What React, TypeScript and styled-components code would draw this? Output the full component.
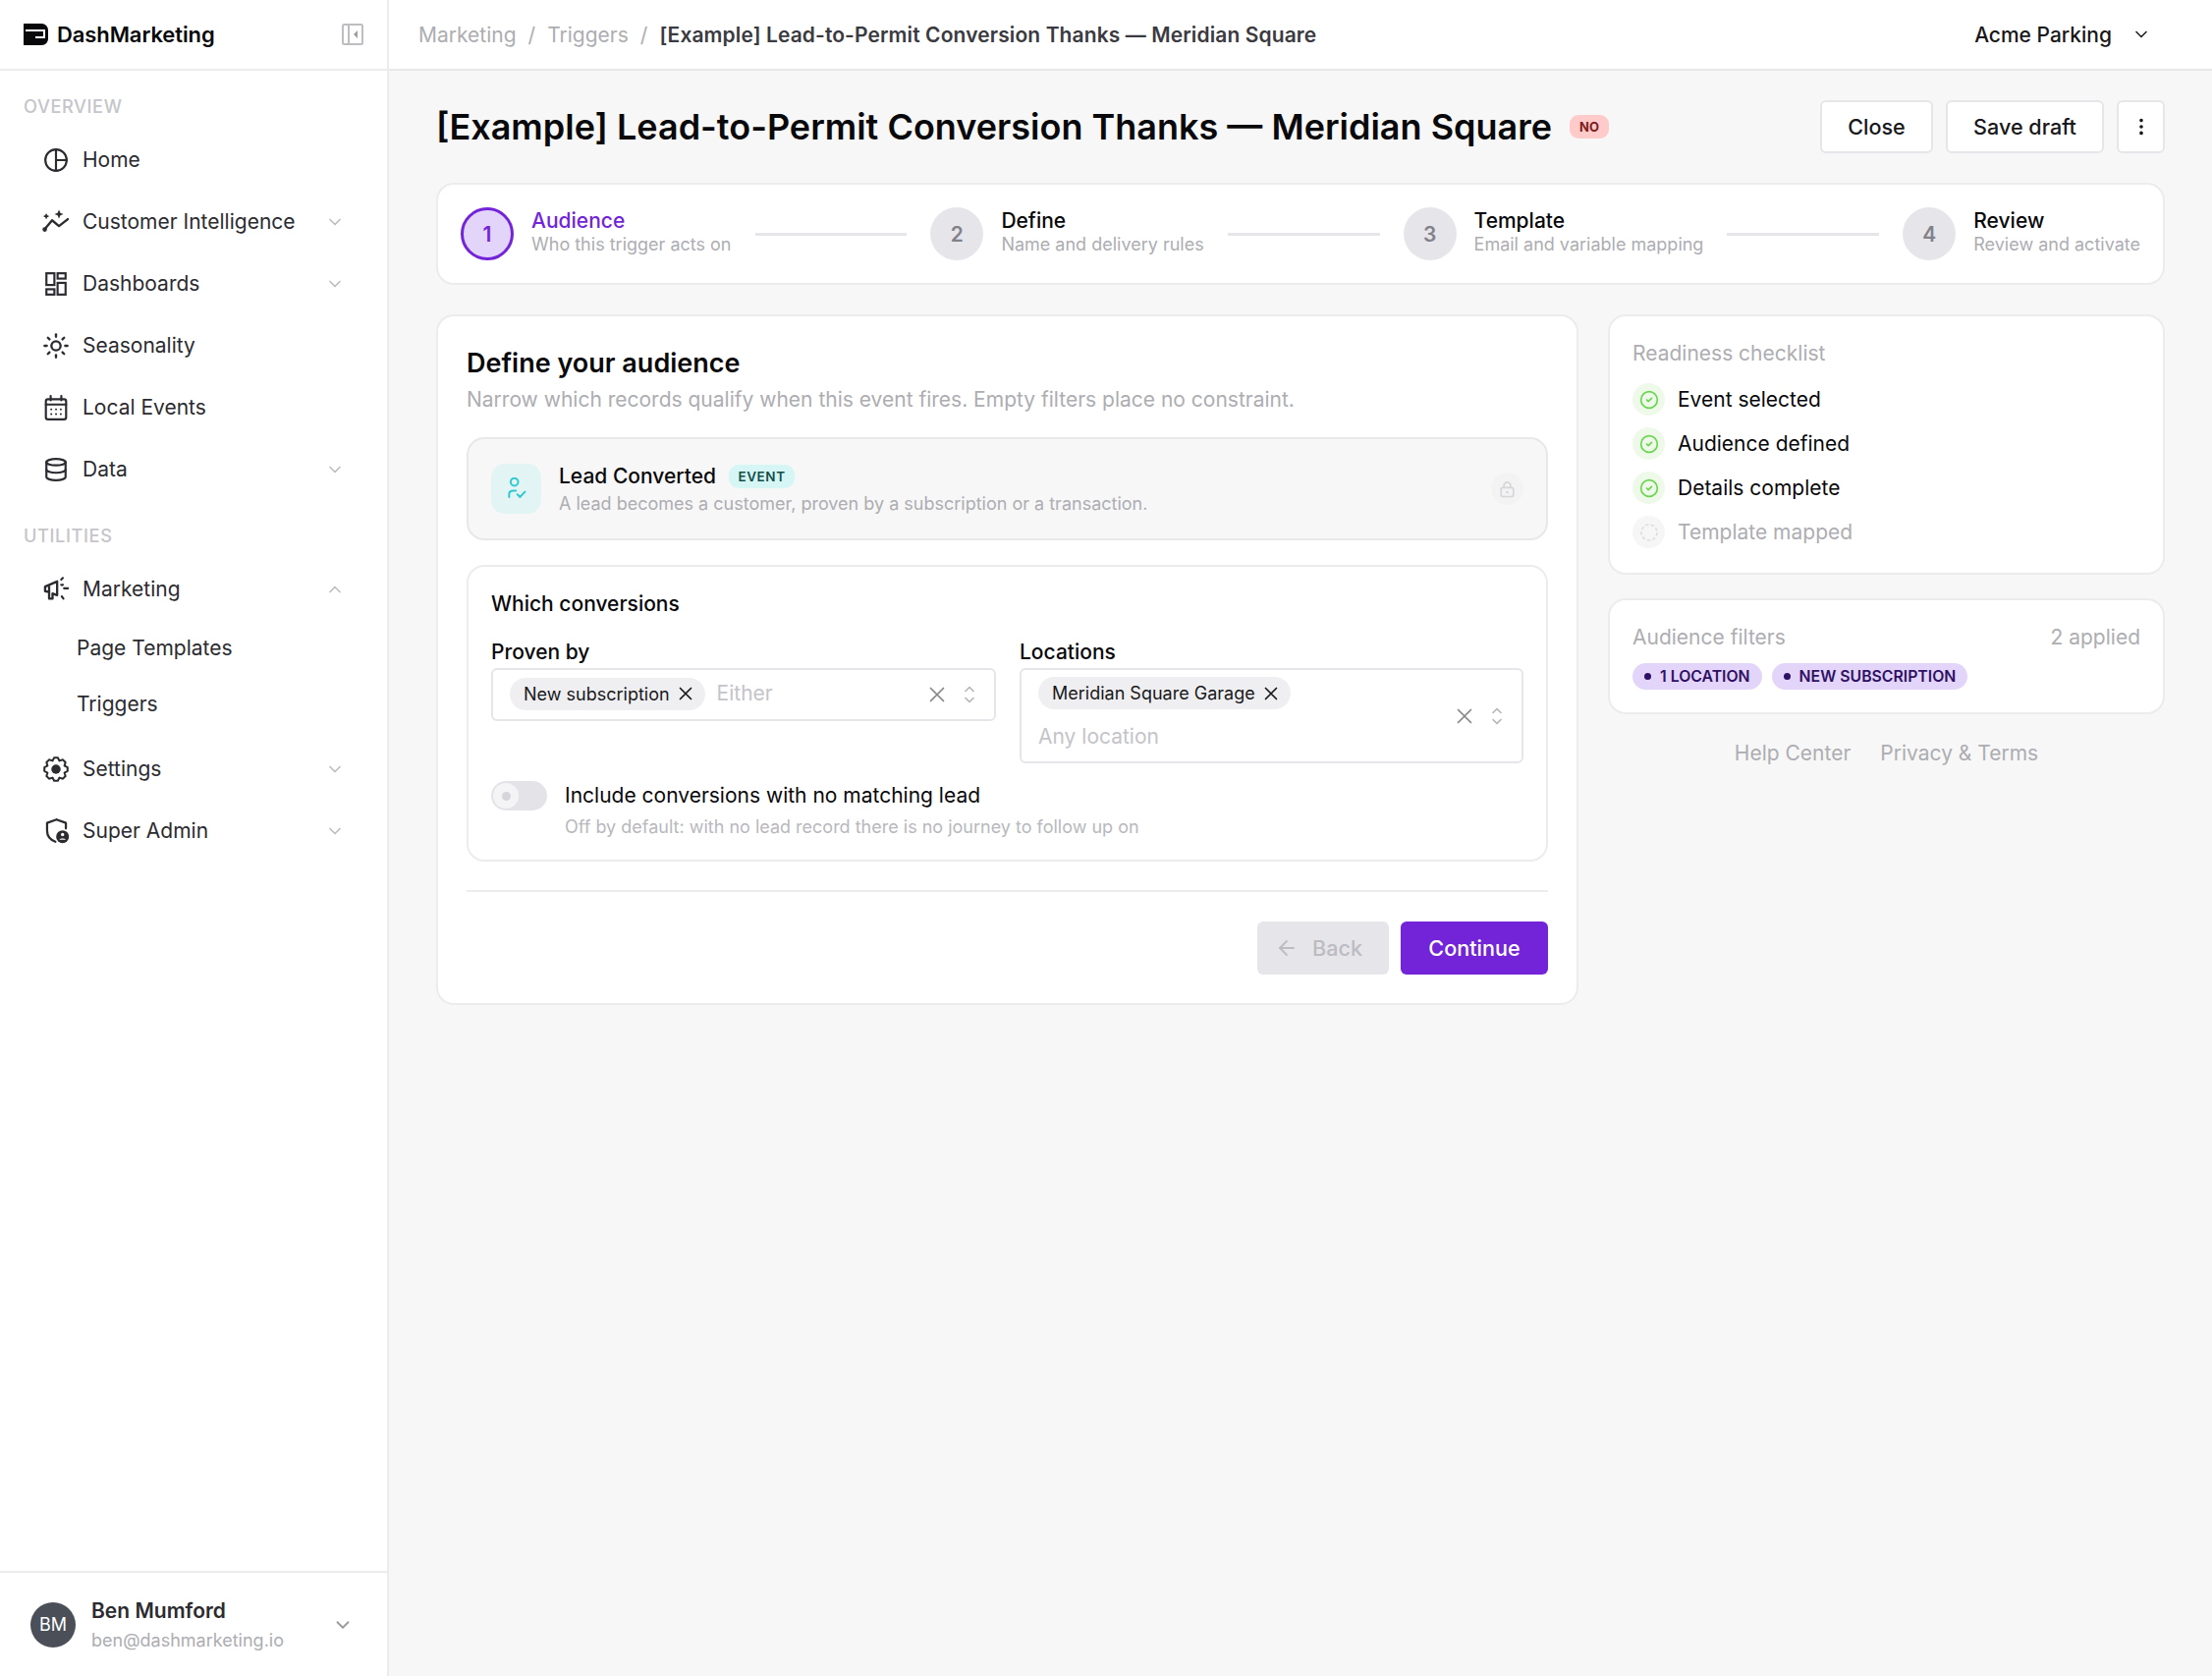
import React from "react";
import styled, { createGlobalStyle } from "styled-components";
import { ChevronDown, ChevronUp, Sun, Database, ArrowLeft, EllipsisVertical, CircleCheck } from "lucide-react";

const Global = createGlobalStyle`
  html, body { margin: 0; padding: 0; background: #f7f7f7; }
  body { font-family: Inter, "Liberation Sans", sans-serif; color: #09090b; }
  * { box-sizing: border-box; }
`;

const Shell = styled.div`
  display: flex;
  width: 2252px;
  height: 1706px;
  overflow: hidden;
`;

const Sidebar = styled.aside`
  width: 396px;
  flex: none;
  display: flex;
  flex-direction: column;
  background: #fff;
  border-right: 2px solid #ececef;
`;

const Brand = styled.div`
  height: 72px;
  flex: none;
  display: flex;
  align-items: center;
  padding: 0 24px 0 24px;
  border-bottom: 2px solid #ececef;
`;

const BrandName = styled.span`
  margin-left: 9px;
  font-size: 22px;
  font-weight: 600;
  letter-spacing: -0.1px;
  flex: 1;
`;

const SideNav = styled.nav`
  flex: 1;
  display: flex;
  flex-direction: column;
  padding: 26px 0 0;
`;

const SectionLabel = styled.div<{ $top?: number }>`
  font-size: 18.2px;
  line-height: 20px;
  font-weight: 500;
  letter-spacing: 0.6px;
  color: #c5c5ca;
  padding-left: 24px;
  margin-top: ${(p) => p.$top ?? 0}px;
  margin-bottom: 13px;
`;

const NavRow = styled.div`
  height: 63px;
  display: flex;
  align-items: center;
  padding: 0 43px 0 43px;
  font-size: 21px;
  color: #2b2b30;
`;

const NavIcon = styled.span`
  width: 28px;
  height: 28px;
  display: flex;
  align-items: center;
  justify-content: center;
  margin-right: 13px;
  color: #2b2b30;
`;

const NavText = styled.span`
  flex: 1;
`;

const SubRow = styled.div`
  height: 57px;
  display: flex;
  align-items: center;
  padding-left: 78px;
  font-size: 21px;
  color: #2b2b30;
`;

const SubList = styled.div`
  margin-bottom: 6px;
`;

const UserFooter = styled.div`
  height: 107px;
  flex: none;
  display: flex;
  align-items: center;
  padding: 0 34px 0 31px;
  border-top: 2px solid #ececef;
`;

const Avatar = styled.div`
  width: 46px;
  height: 46px;
  border-radius: 50%;
  background: #4b5058;
  color: #fff;
  font-size: 18px;
  display: flex;
  align-items: center;
  justify-content: center;
  margin-right: 16px;
`;

const UserMeta = styled.div`
  flex: 1;
  display: flex;
  flex-direction: column;
  gap: 7px;
`;

const UserName = styled.div`
  font-size: 21px;
  line-height: 25px;
  font-weight: 600;
  color: #2b2b30;
`;

const UserMail = styled.div`
  font-size: 18px;
  line-height: 22px;
  color: #adadb2;
`;

const Main = styled.main`
  flex: 1;
  min-width: 0;
  display: flex;
  flex-direction: column;
  background: #f7f7f7;
`;

const TopBar = styled.header`
  height: 72px;
  flex: none;
  display: flex;
  align-items: center;
  background: #fff;
  border-bottom: 2px solid #e8e8eb;
  padding: 0 62px 0 30px;
`;

const Crumbs = styled.div`
  flex: 1;
  display: flex;
  align-items: center;
  gap: 12px;
  font-size: 21px;
  color: #adadb2;
`;

const CrumbNow = styled.span`
  font-weight: 600;
  color: #3a3a40;
  letter-spacing: 0.1px;
`;

const Org = styled.div`
  display: flex;
  align-items: center;
  gap: 20px;
  font-size: 21px;
  font-weight: 500;
  color: #18181b;
`;

const Content = styled.div`
  padding: 30px 48px 0;
  display: flex;
  flex-direction: column;
`;

const TitleRow = styled.div`
  height: 54px;
  display: flex;
  align-items: center;
`;

const Title = styled.h1`
  margin: 0;
  font-size: 36px;
  font-weight: 600;
  color: #09090b;
  white-space: nowrap;
`;

const NoBadge = styled.span`
  margin-left: 18px;
  width: 40px;
  height: 24px;
  border-radius: 9px;
  background: #fecaca;
  color: #7f1d1d;
  font-size: 13px;
  font-weight: 700;
  display: flex;
  align-items: center;
  justify-content: center;
`;

const Actions = styled.div`
  margin-left: auto;
  display: flex;
  gap: 13px;
`;

const GhostButton = styled.button<{ $w: number }>`
  width: ${(p) => p.$w}px;
  height: 54px;
  border: 2px solid #e6e6ea;
  border-radius: 6px;
  background: #fff;
  font: 500 21.6px Inter, sans-serif;
  color: #18181b;
  display: flex;
  align-items: center;
  justify-content: center;
  padding: 0;
`;

const Stepper = styled.section`
  margin-top: 30px;
  height: 104px;
  display: flex;
  align-items: center;
  padding: 0 23px;
  background: #fff;
  border: 2px solid #ececef;
  border-radius: 18px;
`;

const StepDot = styled.div<{ $active?: boolean }>`
  width: 54px;
  height: 54px;
  border-radius: 50%;
  flex: none;
  display: flex;
  align-items: center;
  justify-content: center;
  font-size: 21px;
  font-weight: 600;
  color: ${(p) => (p.$active ? "#7324d9" : "#82828a")};
  background: ${(p) => (p.$active ? "#e3d5f9" : "#e6e5ea")};
  border: ${(p) => (p.$active ? "3px solid #7324d9" : "none")};
`;

const StepCopy = styled.div`
  margin-left: 18px;
  padding-bottom: 2px;
  flex: none;
  display: flex;
  flex-direction: column;
`;

const StepName = styled.div<{ $active?: boolean }>`
  font-size: 21px;
  line-height: 24px;
  font-weight: 500;
  color: ${(p) => (p.$active ? "#7324d9" : "#09090b")};
`;

const StepSub = styled.div`
  font-size: 18px;
  line-height: 24px;
  color: #adadb2;
`;

const StepLine = styled.div`
  flex: 1;
  height: 3px;
  margin: 0 24px;
  background: #e6e5ea;
`;

const Columns = styled.div`
  margin-top: 30px;
  display: grid;
  grid-template-columns: 1163px 567px;
  gap: 30px;
  align-items: start;
`;

const Card = styled.section`
  background: #fff;
  border: 2px solid #ececef;
  border-radius: 18px;
`;

const FormCard = styled(Card)`
  height: 703px;
  padding: 30px 29px 0;
`;

const FormTitle = styled.h2`
  margin: 0;
  font-size: 27px;
  line-height: 36px;
  font-weight: 600;
`;

const FormSub = styled.p`
  margin: 3px 0 0;
  font-size: 21px;
  line-height: 32px;
  color: #adadb2;
`;

const EventBox = styled.div`
  margin-top: 22px;
  height: 105px;
  display: flex;
  align-items: center;
  padding: 0 23px;
  background: #f7f7f7;
  border: 2px solid #e8e8ea;
  border-radius: 18px;
`;

const EventIcon = styled.div`
  width: 51px;
  height: 51px;
  flex: none;
  border-radius: 14px;
  background: #e3f4f5;
  display: flex;
  align-items: center;
  justify-content: center;
  margin-right: 18px;
`;

const EventCopy = styled.div`
  flex: 1;
  padding-top: 2px;
  display: flex;
  flex-direction: column;
  gap: 2px;
`;

const EventTop = styled.div`
  display: flex;
  align-items: center;
  gap: 13px;
  font-size: 21px;
  line-height: 26px;
  font-weight: 500;
`;

const EventTag = styled.span`
  width: 67px;
  height: 24px;
  border-radius: 10px;
  background: #d5f6f5;
  color: #134e4a;
  font-size: 13.5px;
  font-weight: 600;
  letter-spacing: 0.6px;
  display: flex;
  align-items: center;
  justify-content: center;
`;

const EventDesc = styled.div`
  font-size: 18px;
  line-height: 26px;
  color: #adadb2;
`;

const LockBubble = styled.div`
  width: 33px;
  height: 33px;
  border-radius: 50%;
  background: #f3f3f4;
  display: flex;
  align-items: center;
  justify-content: center;
`;

const ConversionBox = styled.div`
  margin-top: 25px;
  height: 302px;
  padding: 24px 23px 0;
  border: 2px solid #ececef;
  border-radius: 18px;
`;

const BoxTitle = styled.div`
  font-size: 21px;
  line-height: 28px;
  font-weight: 500;
`;

const FieldGrid = styled.div`
  margin-top: 22px;
  display: grid;
  grid-template-columns: 514px 513px;
  gap: 24px;
  align-items: start;
`;

const Field = styled.div`
  display: flex;
  flex-direction: column;
`;

const FieldLabel = styled.label`
  font-size: 21px;
  line-height: 26px;
  font-weight: 500;
  height: 29px;
`;

const SelectBox = styled.div<{ $h: number }>`
  height: ${(p) => p.$h}px;
  display: flex;
  align-items: center;
  padding: 0 20px 0 17px;
  background: #fff;
  border: 2px solid #e6e6ea;
  border-radius: 6px;
`;

const SelectValues = styled.div<{ $stack?: boolean }>`
  flex: 1;
  align-self: flex-start;
  padding-top: 7px;
  display: flex;
  flex-direction: ${(p) => (p.$stack ? "column" : "row")};
  align-items: ${(p) => (p.$stack ? "flex-start" : "center")};
  gap: ${(p) => (p.$stack ? "11px" : "12px")};
`;

const Chip = styled.span`
  height: 33px;
  border-radius: 17px;
  background: #efeff1;
  padding: 0 13px 0 14px;
  display: inline-flex;
  align-items: center;
  gap: 9px;
  font-size: 18px;
  color: #18181b;
`;

const Placeholder = styled.span`
  font-size: 21px;
  line-height: 34px;
  color: #c4c4c9;
`;

const SelectControls = styled.div`
  display: flex;
  align-items: center;
  gap: 20px;
  color: #85858b;
`;

const ToggleRow = styled.div`
  margin-top: 18px;
  display: flex;
  align-items: flex-start;
  gap: 18px;
`;

const Toggle = styled.div`
  width: 57px;
  height: 30px;
  flex: none;
  border-radius: 15px;
  background: #e4e3e8;
  padding: 2px;
  display: flex;
`;

const Knob = styled.div`
  width: 26px;
  height: 26px;
  border-radius: 50%;
  background: #f4f4f6;
  display: flex;
  align-items: center;
  justify-content: center;
`;

const KnobDot = styled.div`
  width: 9px;
  height: 9px;
  border-radius: 50%;
  background: #d6d5da;
`;

const ToggleCopy = styled.div`
  display: flex;
  flex-direction: column;
  gap: 4px;
`;

const ToggleName = styled.div`
  font-size: 21px;
  line-height: 30px;
`;

const ToggleHint = styled.div`
  font-size: 18px;
  line-height: 26px;
  color: #b8b8bd;
`;

const Divider = styled.hr`
  margin: 29px 0 0;
  border: 0;
  border-top: 2px solid #ececef;
`;

const FormActions = styled.div`
  margin-top: 30px;
  display: flex;
  justify-content: flex-end;
  gap: 12px;
`;

const BackButton = styled.button`
  width: 134px;
  height: 54px;
  border: 0;
  border-radius: 6px;
  background: #e6e5ea;
  color: #bcbcc3;
  font: 500 21.6px Inter, sans-serif;
  display: flex;
  align-items: center;
  padding: 0 0 0 18px;
  gap: 14px;
`;

const PrimaryButton = styled.button`
  width: 150px;
  height: 54px;
  border: 0;
  border-radius: 6px;
  background: #7324d9;
  color: #fff;
  font: 500 21.6px Inter, sans-serif;
`;

const SideColumn = styled.div`
  display: flex;
  flex-direction: column;
  gap: 24px;
`;

const CheckCard = styled(Card)`
  height: 265px;
  padding: 24px 23px 0;
`;

const SideHeading = styled.div`
  font-size: 21px;
  line-height: 28px;
  color: #adadb2;
`;

const CheckList = styled.div`
  margin-top: 16px;
  display: flex;
  flex-direction: column;
  gap: 12px;
`;

const CheckItem = styled.div<{ $muted?: boolean }>`
  display: flex;
  align-items: center;
  gap: 13px;
  height: 33px;
  font-size: 21px;
  color: ${(p) => (p.$muted ? "#adadb2" : "#09090b")};
`;

const CheckBubble = styled.div<{ $done?: boolean }>`
  width: 33px;
  height: 33px;
  border-radius: 50%;
  background: ${(p) => (p.$done ? "#eef9ea" : "#f6f6f7")};
  color: #6ad64f;
  display: flex;
  align-items: center;
  justify-content: center;
`;

const FilterCard = styled(Card)`
  height: 118px;
  padding: 24px 23px 0;
`;

const FilterHead = styled.div`
  display: flex;
  justify-content: space-between;
`;

const FilterChips = styled.div`
  margin-top: 12px;
  display: flex;
  gap: 10px;
`;

const FilterChip = styled.span`
  height: 27px;
  border-radius: 14px;
  background: #e3d5f9;
  color: #2e1065;
  padding: 0 12px;
  display: inline-flex;
  align-items: center;
  gap: 9px;
  font-size: 15.8px;
  font-weight: 600;
`;

const FilterDot = styled.span`
  width: 7px;
  height: 7px;
  border-radius: 50%;
  background: #2e1065;
`;

const FootLinks = styled.div`
  margin-top: 2px;
  display: flex;
  justify-content: center;
  gap: 30px;
  font-size: 21px;
  line-height: 28px;
  color: #adadb2;
`;

const Ico = ({ children, size = 24 }: { children: React.ReactNode; size?: number }) => (
  <svg width={size} height={size} viewBox="0 0 24 24" fill="none" stroke="currentColor" strokeWidth={2} strokeLinecap="round" strokeLinejoin="round">
    {children}
  </svg>
);

const Logo = () => (
  <svg width="25" height="22" viewBox="0 0 25 22">
    <path d="M0 0H18.5A6.5 6.5 0 0 1 25 6.5V15A6.5 6.5 0 0 1 18.5 22H0Z" fill="#09090b" />
    <path d="M2 6H22V15H12V13H20V8H2Z" fill="#fff" />
  </svg>
);

const PanelIcon = () => (
  <svg width="22" height="22" viewBox="0 0 22 22" fill="none">
    <rect x="1" y="1" width="20" height="20" rx="1.5" stroke="#bdbdc2" strokeWidth="2" />
    <path d="M7 1V21" stroke="#bdbdc2" strokeWidth="2" />
    <path d="M16 7V15L12 11Z" fill="#9d9da3" />
  </svg>
);

const HomeIcon = () => (
  <Ico size={26}>
    <circle cx="12" cy="12" r="10" />
    <path d="M12 2V22M12 12H22" />
  </Ico>
);

const InsightIcon = () => (
  <Ico size={28}>
    <path d="M2 18.5L8.6 10.5L14.6 15.5L22.3 9.5" />
    <circle cx="2.2" cy="18.5" r="1" fill="currentColor" />
    <path d="M14.6 1.3L15.8 4L18.5 5.1L15.8 6.2L14.6 9L13.4 6.2L10.7 5.1L13.4 4Z" fill="currentColor" stroke="none" />
    <path d="M3.5 5.5V8.5M2 7H5" strokeWidth="1.4" />
  </Ico>
);

const DashIcon = () => (
  <Ico size={26}>
    <g strokeLinejoin="miter" strokeLinecap="butt">
      <rect x="3" y="2" width="7.5" height="11" />
      <rect x="13.5" y="2" width="7.5" height="5" />
      <rect x="13.5" y="11" width="7.5" height="11" />
      <rect x="3" y="17" width="7.5" height="5" />
    </g>
  </Ico>
);

const CalIcon = () => (
  <Ico size={26}>
    <rect x="2.5" y="4" width="19" height="19" rx="2" />
    <path d="M7 1V5M17 1V5M2.5 9H21.5" />
    <path d="M7.5 13.5H7.6M12 13.5H12.1M16.5 13.5H16.6M7.5 18H7.6M12 18H12.1M16.5 18H16.6" strokeWidth="1.8" />
  </Ico>
);

const MegaIcon = () => (
  <Ico size={28}>
    <path d="M2.5 9.5L13 5V17L9 15.5V20H6V14.3L2.5 13.5Z" fill="none" />
    <path d="M6 9.5V14" />
    <path d="M16.5 3.5L18 2M19 11H22.5M17 18L18.5 20M16.5 8H18" strokeWidth="1.8" />
  </Ico>
);

const gearPath = (() => {
  const teeth = 8;
  const points: string[] = [];
  for (let i = 0; i < teeth; i++) {
    const step = (Math.PI * 2) / teeth;
    const a = i * step - Math.PI / 2;
    const offsets: [number, number][] = [
      [-0.5, 8.6],
      [-0.2, 11],
      [0.2, 11],
      [0.5, 8.6],
    ];
    offsets.forEach(([o, r]) => {
      const t = a + o * step;
      points.push(`${(12 + r * Math.cos(t)).toFixed(2)} ${(12 + r * Math.sin(t)).toFixed(2)}`);
    });
  }
  return `M${points.join("L")}Z`;
})();

const GearIcon = () => (
  <Ico size={26}>
    <path d={gearPath} strokeWidth="1.9" />
    <circle cx="12" cy="12" r="4.4" fill="currentColor" stroke="none" />
  </Ico>
);

const ShieldIcon = () => (
  <Ico size={27}>
    <path d="M12 2L20.5 5V10M11 22C7 20.5 3.5 17 3.5 12V5L12 2" />
    <circle cx="17.5" cy="17.5" r="5.8" fill="currentColor" stroke="none" />
    <circle cx="17.5" cy="15.6" r="1.5" fill="#fff" stroke="none" />
    <path d="M14.6 20.2C15.2 18.6 19.8 18.6 20.4 20.2Z" fill="#fff" stroke="none" />
  </Ico>
);

const LeadIcon = () => (
  <svg width="20" height="23" viewBox="0 0 26 30" fill="none" stroke="#2dc9cf" strokeWidth="2.6" strokeLinecap="round" strokeLinejoin="round">
    <circle cx="10" cy="6" r="5" />
    <path d="M3 26V22C3 19 5 17.5 9 17.5H12" />
    <path d="M14 22.5L17.5 26L24 19" />
  </svg>
);

const LockIcon = () => (
  <svg width="15" height="18" viewBox="0 0 18 20" fill="none" stroke="#d6d6da" strokeWidth="2" strokeLinecap="round">
    <rect x="1.5" y="8" width="15" height="11" rx="2" />
    <path d="M5 8V5.5A4 4 0 0 1 13 5.5V8" />
    <circle cx="9" cy="13.5" r="1.5" fill="#d6d6da" stroke="none" />
  </svg>
);

const PendingIcon = () => (
  <svg width="18" height="18" viewBox="0 0 18 18" fill="none" stroke="#dededf" strokeWidth="1.6" strokeDasharray="3.4 2.2">
    <circle cx="9" cy="9" r="8" />
  </svg>
);

const ChipX = () => (
  <svg width="14" height="14" viewBox="0 0 14 14" fill="none" stroke="#18181b" strokeWidth="1.7" strokeLinecap="round">
    <path d="M1.5 1.5L12.5 12.5M12.5 1.5L1.5 12.5" />
  </svg>
);

const ClearX = () => (
  <svg width="16" height="16" viewBox="0 0 16 16" fill="none" stroke="currentColor" strokeWidth="1.7" strokeLinecap="round">
    <path d="M1.5 1.5L14.5 14.5M14.5 1.5L1.5 14.5" />
  </svg>
);

const UpDown = () => (
  <svg width="10" height="18" viewBox="0 0 10 18" fill="none" stroke="#b4b4ba" strokeWidth="1.6" strokeLinecap="round" strokeLinejoin="round">
    <path d="M1 5.5L5 1.5L9 5.5M1 12.5L5 16.5L9 12.5" />
  </svg>
);

const Caret = ({ up }: { up?: boolean }) =>
  up ? <ChevronUp size={20} color="#bdbdc2" /> : <ChevronDown size={20} color="#bdbdc2" />;

const steps = [
  { n: 1, name: "Audience", sub: "Who this trigger acts on", active: true },
  { n: 2, name: "Define", sub: "Name and delivery rules" },
  { n: 3, name: "Template", sub: "Email and variable mapping" },
  { n: 4, name: "Review", sub: "Review and activate" },
];

const checks = [
  { t: "Event selected", done: true },
  { t: "Audience defined", done: true },
  { t: "Details complete", done: true },
  { t: "Template mapped", done: false },
];

export default function App() {
  return (
    <>
      <Global />
      <Shell>
        <Sidebar>
          <Brand>
            <Logo />
            <BrandName>DashMarketing</BrandName>
            <PanelIcon />
          </Brand>
          <SideNav>
            <SectionLabel>OVERVIEW</SectionLabel>
            <NavRow><NavIcon><HomeIcon /></NavIcon><NavText>Home</NavText></NavRow>
            <NavRow><NavIcon><InsightIcon /></NavIcon><NavText>Customer Intelligence</NavText><Caret /></NavRow>
            <NavRow><NavIcon><DashIcon /></NavIcon><NavText>Dashboards</NavText><Caret /></NavRow>
            <NavRow><NavIcon><Sun size={28} strokeWidth={2} /></NavIcon><NavText>Seasonality</NavText></NavRow>
            <NavRow><NavIcon><CalIcon /></NavIcon><NavText>Local Events</NavText></NavRow>
            <NavRow><NavIcon><Database size={26} strokeWidth={2} /></NavIcon><NavText>Data</NavText><Caret /></NavRow>
            <SectionLabel $top={26}>UTILITIES</SectionLabel>
            <NavRow><NavIcon><MegaIcon /></NavIcon><NavText>Marketing</NavText><Caret up /></NavRow>
            <SubList>
              <SubRow>Page Templates</SubRow>
              <SubRow>Triggers</SubRow>
            </SubList>
            <NavRow><NavIcon><GearIcon /></NavIcon><NavText>Settings</NavText><Caret /></NavRow>
            <NavRow><NavIcon><ShieldIcon /></NavIcon><NavText>Super Admin</NavText><Caret /></NavRow>
          </SideNav>
          <UserFooter>
            <Avatar>BM</Avatar>
            <UserMeta>
              <UserName>Ben Mumford</UserName>
              <UserMail>ben@dashmarketing.io</UserMail>
            </UserMeta>
            <ChevronDown size={22} color="#9a9aa0" />
          </UserFooter>
        </Sidebar>
        <Main>
          <TopBar>
            <Crumbs>
              <span>Marketing</span>
              <span>/</span>
              <span>Triggers</span>
              <span>/</span>
              <CrumbNow>[Example] Lead-to-Permit Conversion Thanks — Meridian Square</CrumbNow>
            </Crumbs>
            <Org>
              Acme Parking
              <ChevronDown size={20} color="#27272a" />
            </Org>
          </TopBar>
          <Content>
            <TitleRow>
              <Title>[Example] Lead-to-Permit Conversion Thanks — Meridian Square</Title>
              <NoBadge>NO</NoBadge>
              <Actions>
                <GhostButton $w={115}>Close</GhostButton>
                <GhostButton $w={161}>Save draft</GhostButton>
                <GhostButton $w={49}><EllipsisVertical size={22} /></GhostButton>
              </Actions>
            </TitleRow>
            <Stepper>
              {steps.map((s, i) => (
                <React.Fragment key={s.n}>
                  {i > 0 && <StepLine />}
                  <StepDot $active={s.active}>{s.n}</StepDot>
                  <StepCopy>
                    <StepName $active={s.active}>{s.name}</StepName>
                    <StepSub>{s.sub}</StepSub>
                  </StepCopy>
                </React.Fragment>
              ))}
            </Stepper>
            <Columns>
              <FormCard>
                <FormTitle>Define your audience</FormTitle>
                <FormSub>Narrow which records qualify when this event fires. Empty filters place no constraint.</FormSub>
                <EventBox>
                  <EventIcon><LeadIcon /></EventIcon>
                  <EventCopy>
                    <EventTop>Lead Converted<EventTag>EVENT</EventTag></EventTop>
                    <EventDesc>A lead becomes a customer, proven by a subscription or a transaction.</EventDesc>
                  </EventCopy>
                  <LockBubble><LockIcon /></LockBubble>
                </EventBox>
                <ConversionBox>
                  <BoxTitle>Which conversions</BoxTitle>
                  <FieldGrid>
                    <Field>
                      <FieldLabel>Proven by</FieldLabel>
                      <SelectBox $h={54}>
                        <SelectValues>
                          <Chip>New subscription<ChipX /></Chip>
                          <Placeholder>Either</Placeholder>
                        </SelectValues>
                        <SelectControls>
                          <ClearX />
                          <UpDown />
                        </SelectControls>
                      </SelectBox>
                    </Field>
                    <Field>
                      <FieldLabel>Locations</FieldLabel>
                      <SelectBox $h={97}>
                        <SelectValues $stack>
                          <Chip>Meridian Square Garage<ChipX /></Chip>
                          <Placeholder>Any location</Placeholder>
                        </SelectValues>
                        <SelectControls>
                          <ClearX />
                          <UpDown />
                        </SelectControls>
                      </SelectBox>
                    </Field>
                  </FieldGrid>
                  <ToggleRow>
                    <Toggle><Knob><KnobDot /></Knob></Toggle>
                    <ToggleCopy>
                      <ToggleName>Include conversions with no matching lead</ToggleName>
                      <ToggleHint>Off by default: with no lead record there is no journey to follow up on</ToggleHint>
                    </ToggleCopy>
                  </ToggleRow>
                </ConversionBox>
                <Divider />
                <FormActions>
                  <BackButton><ArrowLeft size={24} strokeWidth={1.8} />Back</BackButton>
                  <PrimaryButton>Continue</PrimaryButton>
                </FormActions>
              </FormCard>
              <SideColumn>
                <CheckCard>
                  <SideHeading>Readiness checklist</SideHeading>
                  <CheckList>
                    {checks.map((c) => (
                      <CheckItem key={c.t} $muted={!c.done}>
                        <CheckBubble $done={c.done}>
                          {c.done ? <CircleCheck size={20} strokeWidth={2} /> : <PendingIcon />}
                        </CheckBubble>
                        {c.t}
                      </CheckItem>
                    ))}
                  </CheckList>
                </CheckCard>
                <FilterCard>
                  <FilterHead>
                    <SideHeading>Audience filters</SideHeading>
                    <SideHeading>2 applied</SideHeading>
                  </FilterHead>
                  <FilterChips>
                    <FilterChip><FilterDot />1 LOCATION</FilterChip>
                    <FilterChip><FilterDot />NEW SUBSCRIPTION</FilterChip>
                  </FilterChips>
                </FilterCard>
                <FootLinks>
                  <span>Help Center</span>
                  <span>Privacy &amp; Terms</span>
                </FootLinks>
              </SideColumn>
            </Columns>
          </Content>
        </Main>
      </Shell>
    </>
  );
}
